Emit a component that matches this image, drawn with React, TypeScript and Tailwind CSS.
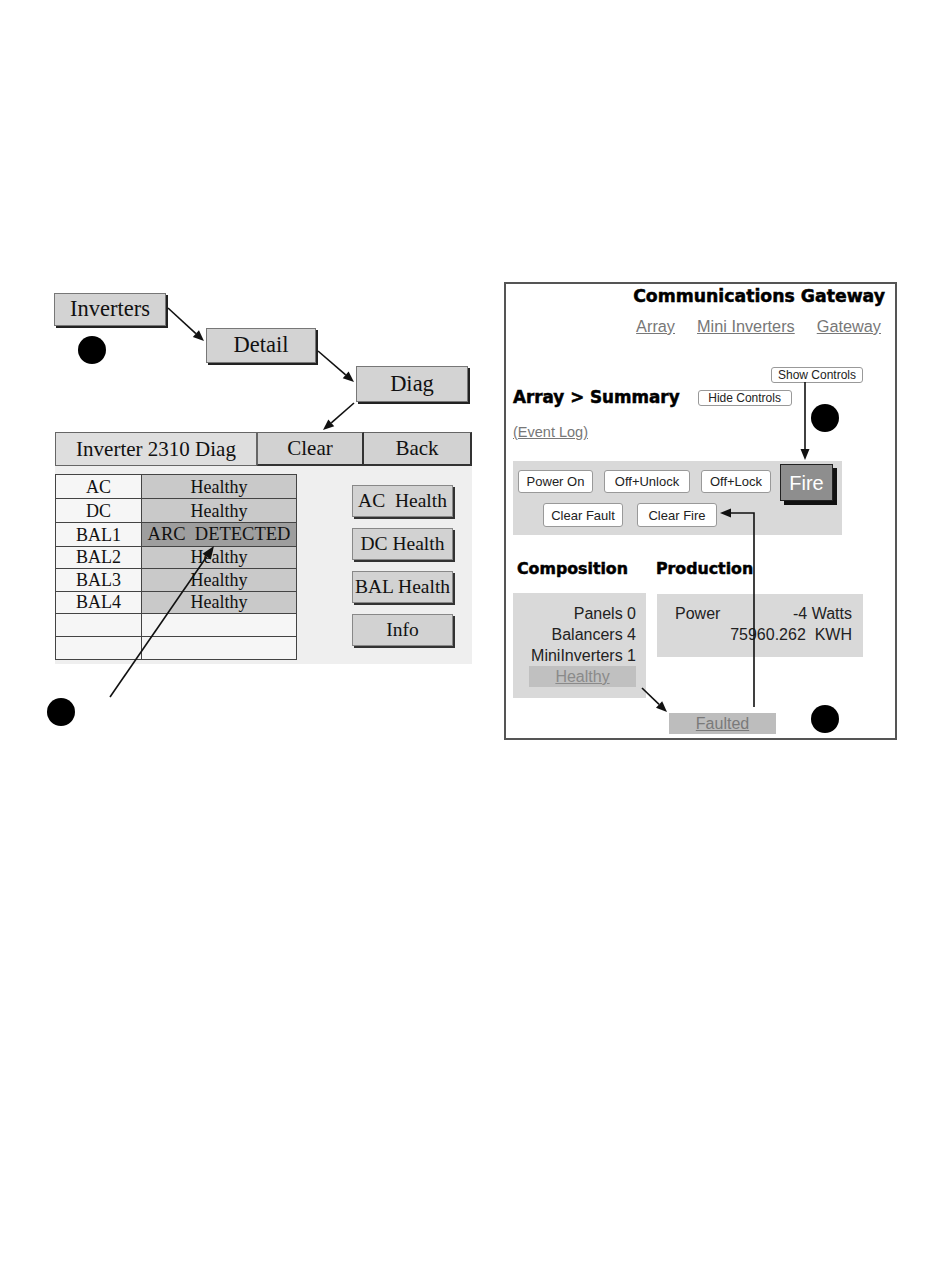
import React from "react";

const serif = "font-['Liberation_Serif','Times_New_Roman',serif]";
const sans = "font-['Liberation_Sans',Arial,sans-serif]";
const heavy = "font-['DejaVu_Sans',Verdana,sans-serif] font-bold [-webkit-text-stroke:0.5px_#000]";

function Arrow({ x1, y1, x2, y2, len = 11, w = 4.5 }: { x1: number; y1: number; x2: number; y2: number; len?: number; w?: number }) {
  const dx = x2 - x1;
  const dy = y2 - y1;
  const d = Math.hypot(dx, dy);
  const ux = dx / d;
  const uy = dy / d;
  const bx = x2 - ux * len;
  const by = y2 - uy * len;
  const px = -uy * w;
  const py = ux * w;
  return (
    <g>
      <line x1={x1} y1={y1} x2={bx} y2={by} stroke="#111" strokeWidth={1.6} />
      <polygon points={`${x2},${y2} ${bx + px},${by + py} ${bx - px},${by - py}`} fill="#111" />
    </g>
  );
}

const rows: { k: string; v: string; h: number; kind: "ok" | "arc" | "empty" }[] = [
  { k: "AC", v: "Healthy", h: 24, kind: "ok" },
  { k: "DC", v: "Healthy", h: 24, kind: "ok" },
  { k: "BAL1", v: "ARC\u00a0\u00a0DETECTED", h: 24, kind: "arc" },
  { k: "BAL2", v: "Healthy", h: 22, kind: "ok" },
  { k: "BAL3", v: "Healthy", h: 24, kind: "ok" },
  { k: "BAL4", v: "Healthy", h: 22, kind: "ok" },
  { k: "", v: "", h: 23, kind: "empty" },
  { k: "", v: "", h: 23, kind: "empty" },
];

function LeftFigure() {
  const box = `${serif} text-[22.5px] text-[#111] bg-[#d3d3d3] border border-[#777] shadow-[2px_2px_0_#222] flex items-center justify-center leading-none`;
  const sideBtn = `${serif} text-[19.5px] text-[#111] bg-[#d2d2d2] border border-[#888] shadow-[2px_2px_0_#333] w-[101px] h-[32px] flex items-center justify-center leading-none`;
  return (
    <div className="w-[418px] flex flex-col">
      <div className={`${box} mt-[11px] w-[112px] h-[33px]`}>Inverters</div>
      <div className={`${box} ml-[152px] mt-[2px] w-[110px] h-[35px]`}>Detail</div>
      <div className={`${box} ml-[302px] mt-[3px] w-[112px] h-[36px]`}>Diag</div>

      <div className="ml-[1px] mt-[30px] w-[417px] flex flex-col">
        <div className={`flex h-[34px] ${serif} text-[21px] text-[#111] leading-none`}>
          <div className="w-[202px] bg-[#dedede] border border-[#666] flex items-center justify-center">Inverter 2310 Diag</div>
          <div className="w-[107px] bg-[#d2d2d2] border-t border-l border-[#666] border-r-2 border-b-2 border-r-[#333] border-b-[#333] flex items-center justify-center">Clear</div>
          <div className="w-[108px] bg-[#d2d2d2] border-t border-[#666] border-r-2 border-b-2 border-r-[#333] border-b-[#333] flex items-center justify-center">Back</div>
        </div>
        <div className="h-[198px] bg-[#efefef] flex">
          <div className={`mt-[8px] w-[242px] h-[186px] border-t border-l border-r border-[#444] flex flex-col ${serif} text-[18px] text-[#111] leading-none`}>
            {rows.map((r, i) => (
              <div key={i} className="flex border-b border-[#444]" style={{ height: r.h }}>
                <div className="w-[86px] bg-[#f6f6f6] border-r border-[#444] flex items-end justify-center pb-[2px]">{r.k}</div>
                <div
                  className={`flex-1 flex items-end justify-center pb-[2px] ${
                    r.kind === "ok" ? "bg-[#c9c9c9]" : r.kind === "arc" ? "bg-[#9e9e9e] text-[18.5px]" : "bg-[#f6f6f6]"
                  }`}
                >
                  {r.v}
                </div>
              </div>
            ))}
          </div>
          <div className="ml-[55px] pt-[19px] flex flex-col gap-[11px]">
            <div className={sideBtn}>AC&nbsp;&nbsp;Health</div>
            <div className={sideBtn}>DC Health</div>
            <div className={sideBtn}>BAL Health</div>
            <div className={sideBtn}>Info</div>
          </div>
        </div>
      </div>
    </div>
  );
}

function RightPanel() {
  const btn = `${sans} text-[13px] text-[#222] bg-white border border-[#999] rounded-[3px] h-[23px] flex items-center justify-center leading-none`;
  const smallBtn = `${sans} text-[12px] text-[#222] bg-white border border-[#999] rounded-[3px] h-[16px] flex items-center justify-center leading-none`;
  const link = `${sans} text-[16.3px] text-[#777] underline leading-[20px]`;
  return (
    <div className="ml-[32px] w-[393px] h-[458px] border-2 border-[#555] flex flex-col">
      <div className={`${heavy} text-[17.3px] text-black leading-[20px] mt-[2px] pr-[10px] text-right`}>Communications Gateway</div>
      <div className="mt-[10px] pr-[14px] flex justify-end gap-[22px]">
        <span className={link}>Array</span>
        <span className={link}>Mini Inverters</span>
        <span className={link}>Gateway</span>
      </div>
      <div className="mt-[31px] flex justify-end pr-[32px]">
        <div className={`${smallBtn} w-[92px] h-[15px]`}>Show Controls</div>
      </div>
      <div className="mt-[4px] h-[20px] pl-[7px] flex items-center">
        <span className={`${heavy} text-[16.8px] text-black leading-[20px]`}>Array &gt; Summary</span>
        <div className={`${smallBtn} ml-[18px] w-[94px] mt-[2px]`}>Hide Controls</div>
      </div>
      <div className={`mt-[16px] pl-[7px] ${sans} text-[14.5px] text-[#777] underline leading-[18px]`}>(Event Log)</div>

      <div className="mt-[20px] ml-[7px] w-[329px] h-[74px] bg-[#d9d9d9] pt-[4px] flex flex-col">
        <div className="h-[38px] pl-[5px] flex items-start">
          <div className={`${btn} mt-[5px] w-[75px]`}>Power On</div>
          <div className={`${btn} mt-[5px] ml-[11px] w-[86px]`}>Off+Unlock</div>
          <div className={`${btn} mt-[5px] ml-[11px] w-[70px]`}>Off+Lock</div>
          <div className={`${sans} ml-[9px] -mt-[1px] w-[53px] h-[37px] bg-[#8e8e8e] border border-[#222] shadow-[4px_4px_0_#111] text-white text-[20px] flex items-center justify-center leading-none`}>Fire</div>
        </div>
        <div className="h-[24px] pl-[30px] flex items-start">
          <div className={`${btn} h-[24px] w-[80px]`}>Clear Fault</div>
          <div className={`${btn} h-[24px] ml-[14px] w-[80px]`}>Clear Fire</div>
        </div>
      </div>

      <div className={`mt-[24px] h-[20px] flex ${heavy} text-[15.8px] text-black leading-[20px]`}>
        <span className="ml-[11px]">Composition</span>
        <span className="ml-[28px]">Production</span>
      </div>

      <div className="mt-[14px] ml-[7px] flex items-start">
        <div className={`w-[133px] h-[105px] bg-[#d9d9d9] pt-[10px] pr-[10px] flex flex-col items-end ${sans} text-[16px] text-[#222] leading-[21px]`}>
          <div>Panels 0</div>
          <div>Balancers 4</div>
          <div>MiniInverters 1</div>
          <div className="w-[107px] h-[21px] bg-[#c0c0c0] text-[#8a8a8a] underline text-center leading-[21px]">Healthy</div>
        </div>
        <div className={`ml-[11px] mt-[1px] w-[206px] h-[63px] bg-[#d9d9d9] pt-[9px] pl-[18px] pr-[11px] ${sans} text-[16px] text-[#222] leading-[21px]`}>
          <div className="flex justify-between">
            <span>Power</span>
            <span>-4 Watts</span>
          </div>
          <div className="text-right">75960.262&nbsp;&nbsp;KWH</div>
        </div>
      </div>

      <div className={`mt-[15px] ml-[163px] w-[107px] h-[21px] bg-[#bdbdbd] text-[#7a7a7a] underline text-center ${sans} text-[16px] leading-[21px]`}>Faulted</div>
    </div>
  );
}

export default function App() {
  return (
    <div className="relative w-[950px] h-[1267px] bg-white overflow-hidden">
      <div className="flex pt-[282px] pl-[54px]">
        <LeftFigure />
        <RightPanel />
      </div>
      <svg className="absolute inset-0 pointer-events-none" width={950} height={1267}>
        <Arrow x1={168} y1={308} x2={204} y2={341} />
        <Arrow x1={318} y1={351} x2={354} y2={382} />
        <Arrow x1={354} y1={403} x2={323} y2={430} />
        <Arrow x1={110} y1={697} x2={214} y2={546} len={13} w={5} />
        <Arrow x1={805} y1={382} x2={805} y2={460} />
        <Arrow x1={642} y1={688} x2={667} y2={712} />
        <polyline points="754,707 754,513 731,513" fill="none" stroke="#111" strokeWidth={1.6} />
        <polygon points="720,513 731,508.5 731,517.5" fill="#111" />
        <circle cx={92} cy={350} r={14} fill="#000" />
        <circle cx={61} cy={712} r={14} fill="#000" />
        <circle cx={825} cy={418} r={14} fill="#000" />
        <circle cx={825} cy={719} r={14} fill="#000" />
      </svg>
    </div>
  );
}
